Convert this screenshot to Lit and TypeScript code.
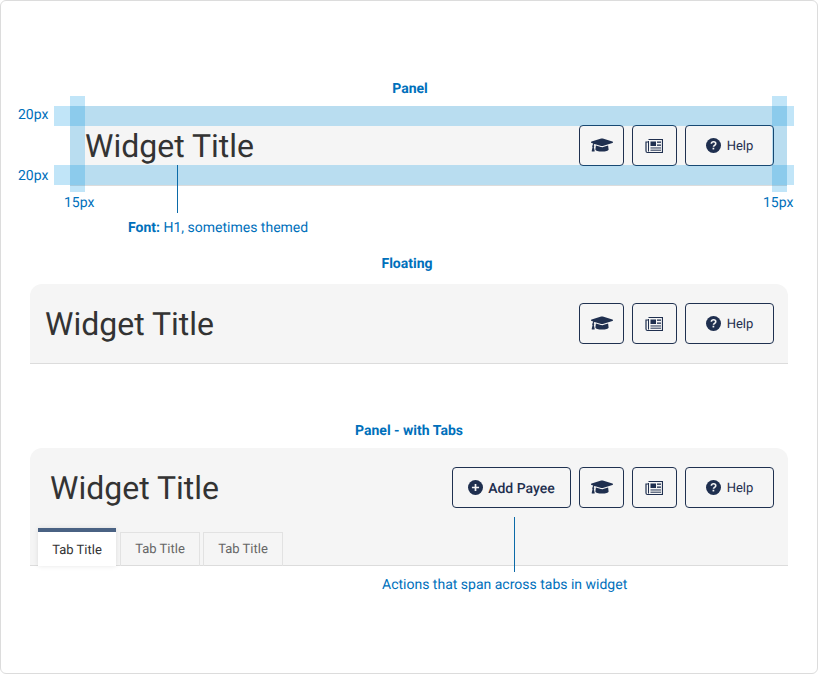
import { LitElement, html, css, svg } from "lit";
import { customElement } from "lit/decorators.js";

const cap = svg`<svg class="cap" viewBox="0 0 640 512"><path fill="currentColor" d="M622.34 153.2L343.4 67.5c-15.2-4.67-31.6-4.67-46.79 0L17.66 153.2c-23.54 7.23-23.54 38.36 0 45.59l48.63 14.94c-10.67 13.19-17.23 29.28-17.88 46.9C38.78 266.15 32 276.11 32 288c0 10.78 5.68 19.85 13.86 25.65L20.33 428.53C18.11 438.52 25.71 448 35.94 448h56.11c10.24 0 17.84-9.48 15.62-19.47L82.14 313.65C90.32 307.85 96 298.78 96 288c0-11.57-6.47-21.25-15.66-26.87.76-15.02 8.44-28.3 20.69-36.72L296.6 284.5c9.06 2.78 26.44 6.25 46.79 0l278.95-85.7c23.55-7.24 23.55-38.36 0-45.6zM352.79 315.09c-28.53 8.76-52.84 3.92-65.59 0l-145.02-44.55L128 384c0 35.35 85.96 64 192 64s192-28.65 192-64l-14.18-113.47-145.03 44.56z"/></svg>`;
const paper = svg`<svg class="paper" viewBox="0 0 18 16"><g fill="none" stroke="currentColor"><path d="M3.5 1.5h14v13h-15a1.500 1.500 0 0 1-1.500-1.500v-9h2.500" stroke-width="1.200"/><path d="M3.500 3v10.500" stroke-width="1"/></g><g fill="currentColor"><rect x="5.500" y="3.500" width="5.500" height="4.500"/><rect x="12" y="3.500" width="4" height="1.300"/><rect x="12" y="6.500" width="4" height="1.300"/><rect x="5.500" y="9.300" width="10.500" height="1.300" opacity=".75"/><rect x="5.500" y="11.600" width="10.500" height="1.300" opacity=".75"/></g></svg>`;
const help = svg`<svg class="round" viewBox="0 0 16 16"><circle cx="8" cy="8" r="8" fill="currentColor"/><path d="M5.700 6.200c.1-1.400 1.100-2.200 2.400-2.200 1.300 0 2.300.8 2.300 2 0 1.800-2.400 1.800-2.400 3.400" fill="none" stroke="#f5f5f5" stroke-width="1.700"/><rect x="7" y="10.400" width="1.800" height="1.800" fill="#f5f5f5"/></svg>`;
const plus = svg`<svg class="round" viewBox="0 0 16 16"><circle cx="8" cy="8" r="8" fill="currentColor"/><path d="M8 4.200v7.600M4.200 8h7.600" stroke="#f5f5f5" stroke-width="1.800"/></svg>`;

@customElement("app-root")
export class AppRoot extends LitElement {
  static styles = css`
    :host { display: block; font-family: Roboto, "Liberation Sans", sans-serif; text-rendering: geometricPrecision; }
    * { box-sizing: border-box; }
    .frame {
      position: relative; width: 818px; height: 674px; background: #fff;
      border: 1px solid #dcdcdc; border-radius: 6px; padding: 79px 29px 0;
    }
    .heading {
      height: 16px; line-height: 18px; font-size: 14px; font-weight: 700;
      color: #0070bb; text-align: center; margin: 0;
    }
    .heading.first { padding-left: 2px; }
    .heading.float { margin-top: 69px; padding-right: 4px; }
    .heading.tabs { margin-top: 58px; }
    .panel { position: relative; background: #f5f5f5; }
    .panel.plain {
      margin: 10px 1px 0 40px; padding: 20px 13px 20px 15px; height: 80px;
      border-bottom: 1px solid #dcdcdc;
    }
    .panel.floating {
      margin: 13px 0 0 0; padding: 19px 14px 19px 15px; height: 80px;
      border-radius: 12px 12px 0 0; border-bottom: 1px solid #dcdcdc;
    }
    .panel.tabbed {
      margin: 10px 0 0 0; height: 118px; padding: 19px 14px 0 20px;
      border-radius: 12px 12px 0 0; border-bottom: 1px solid #dcdcdc;
    }
    .row { display: flex; align-items: center; justify-content: space-between; height: 41px; }
    .plain .row { height: 39px; }
    h1 { margin: 2px 0 0; font-size: 32px; font-weight: 400; color: #333; line-height: 43px; }
    .actions { display: flex; gap: 8px; }
    .btn {
      display: flex; align-items: center; justify-content: center; gap: 6px;
      height: 41px; background: #f5f5f5; border: 1px solid #1f3150; border-radius: 4px;
      color: #1f2f4f; font: 400 13px Roboto, "Liberation Sans", sans-serif; flex: none; padding: 0;
      text-rendering: geometricPrecision;
    }
    .btn span { padding-top: 2px; }
    .plain .actions { margin: -1px 0; }
    .icon { width: 45px; }
    .help { width: 89px; }
    .add { width: 119px; font-size: 14px; font-weight: 500; gap: 5px; }
    .cap { width: 22px; height: 18px; display: block; margin-top: -1px; }
    .paper { width: 18px; height: 16px; display: block; margin-left: -1px; }
    .round { width: 15px; height: 15px; display: block; }
    .tabstrip { display: flex; align-items: flex-end; margin: 20px 0 0 -12px; gap: 3px; height: 38px; }
    .tab {
      display: flex; align-items: center; justify-content: center; width: 80px; height: 34px;
      border: 1px solid #e2e2e2; border-bottom: 0; color: #666; font-size: 13px; padding-bottom: 1px;
    }
    .tab.active {
      width: 78px; height: 38px; background: #fff; border: 0; border-top: 4px solid #4a6283;
      color: #333; margin-right: 1px; box-shadow: 0 0 5px rgba(0,0,0,.1); padding: 2px 0 0;
    }
    .bandh, .bandv { position: absolute; background: rgba(0,150,225,.245); }
    .bandh { left: -16px; right: -7px; height: 20px; }
    .bandh.top { top: 0; }
    .bandh.bottom { top: 59px; }
    .bandv { top: -10px; height: 96px; width: 15px; }
    .bandv.l { left: 0; }
    .bandv.r { right: 0; }
    .note { position: absolute; font-size: 14px; line-height: 18px; color: #0070bb; white-space: nowrap; }
    .note b { font-weight: 700; }
    .line { position: absolute; width: 1px; background: #0b6aa8; }
  `;

  private buttons() {
    return html`
      <button class="btn icon">${cap}</button>
      <button class="btn icon">${paper}</button>
      <button class="btn help">${help}<span>Help</span></button>`;
  }

  render() {
    return html`
      <div class="frame">
        <p class="heading first">Panel</p>
        <div class="panel plain">
          <div class="row"><h1>Widget Title</h1><div class="actions">${this.buttons()}</div></div>
          <div class="bandh top"></div>
          <div class="bandh bottom"></div>
          <div class="bandv l"></div>
          <div class="bandv r"></div>
          <div class="note" style="left:-52px;top:0px">20px</div>
          <div class="note" style="left:-52px;top:61px">20px</div>
          <div class="note" style="left:-6px;top:88px">15px</div>
          <div class="note" style="left:693px;top:88px">15px</div>
          <div class="line" style="left:107px;top:59px;height:48px"></div>
          <div class="note" style="left:58px;top:113px"><b>Font:</b> H1, sometimes themed</div>
        </div>
        <p class="heading float">Floating</p>
        <div class="panel floating">
          <div class="row"><h1>Widget Title</h1><div class="actions">${this.buttons()}</div></div>
        </div>
        <p class="heading tabs">Panel - with Tabs</p>
        <div class="panel tabbed">
          <div class="row"><h1>Widget Title</h1>
            <div class="actions"><button class="btn add">${plus}<span>Add Payee</span></button>${this.buttons()}</div>
          </div>
          <div class="tabstrip">
            <div class="tab active">Tab Title</div><div class="tab">Tab Title</div><div class="tab">Tab Title</div>
          </div>
          <div class="line" style="left:484px;top:69px;height:55px"></div>
          <div class="note" style="left:352px;top:128px">Actions that span across tabs in widget</div>
        </div>
      </div>
    `;
  }
}
